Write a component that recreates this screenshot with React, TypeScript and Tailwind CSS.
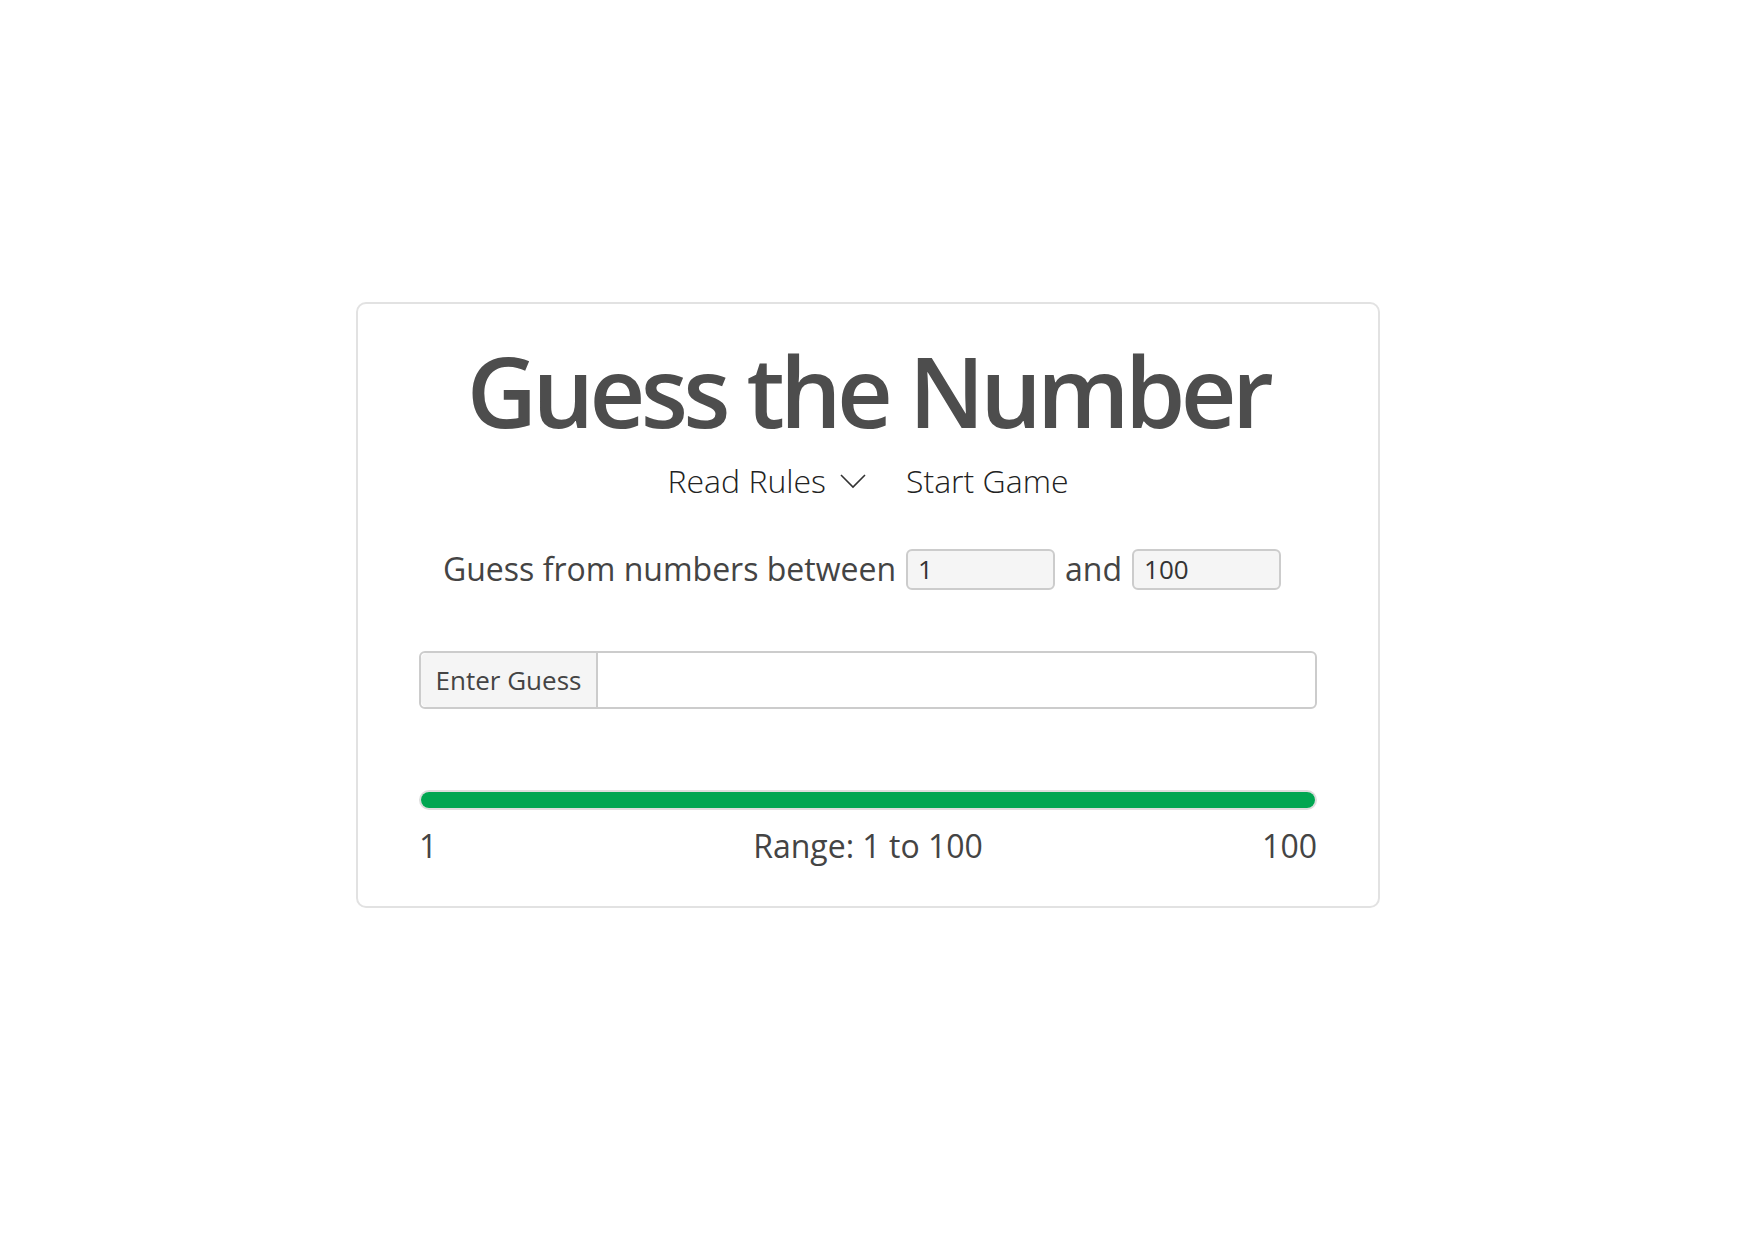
import React from 'react'

const App: React.FC = () => {
  return (
    <div className="min-h-[1250px] bg-white pt-[302px] pl-[356px] font-['Open_Sans',sans-serif]">
      <div className="w-[1024px] rounded-[10px] border-2 border-[#e2e2e2] px-[61px] pt-[38px] pb-[39px]">
        <h1 className="text-center text-[97px] font-semibold leading-none tracking-[-0.048em] text-[#4d4d4d]">
          Guess the Number
        </h1>

        {/* nav */}
        <div className="mt-[18px] flex items-center justify-center gap-[40px] text-[32px] leading-[48px] font-light text-[#222]">
          <div className="flex items-center gap-[14px]">
            <span>Read Rules</span>
            <svg width="26" height="16" viewBox="0 0 26 16" fill="none" stroke="#333" strokeWidth="1.6">
              <path d="M1 2 L13 14 L25 2" />
            </svg>
          </div>
          <span>Start Game</span>
        </div>

        {/* range inputs */}
        <div className="mt-[40px] flex items-center justify-center gap-[10px] pr-[12px] text-[32px] leading-[48px] text-[#444]">
          <span>Guess from numbers between</span>
          <input
            className="h-[41px] w-[149px] rounded-md border-2 border-[#cccccc] bg-[#f5f5f5] px-[10px] text-[26px] text-[#333]"
            defaultValue="1"
          />
          <span>and</span>
          <input
            className="h-[41px] w-[149px] rounded-md border-2 border-[#cccccc] bg-[#f5f5f5] px-[10px] text-[26px] text-[#333]"
            defaultValue="100"
          />
        </div>

        {/* guess input group */}
        <div className="mt-[58px] flex h-[58px] rounded-md border-2 border-[#cccccc]">
          <span className="flex w-[177px] items-center justify-center rounded-l-md border-r-2 border-[#cccccc] bg-[#f5f5f5] text-[26px] text-[#444]">
            Enter Guess
          </span>
          <input className="flex-1 rounded-r-md bg-white px-3 text-[26px] outline-none" />
        </div>

        {/* progress */}
        <div className="mt-[81px] h-[20px] rounded-full border-2 border-[#dddddd] bg-white">
          <div className="h-full w-full rounded-full bg-[#00a651]" />
        </div>

        <div className="mt-[15px] grid grid-cols-3 items-center text-[32px] leading-[42px] text-[#444]">
          <span>1</span>
          <span className="text-center whitespace-nowrap">Range: 1 to 100</span>
          <span className="text-right">100</span>
        </div>
      </div>
    </div>
  )
}

export default App
